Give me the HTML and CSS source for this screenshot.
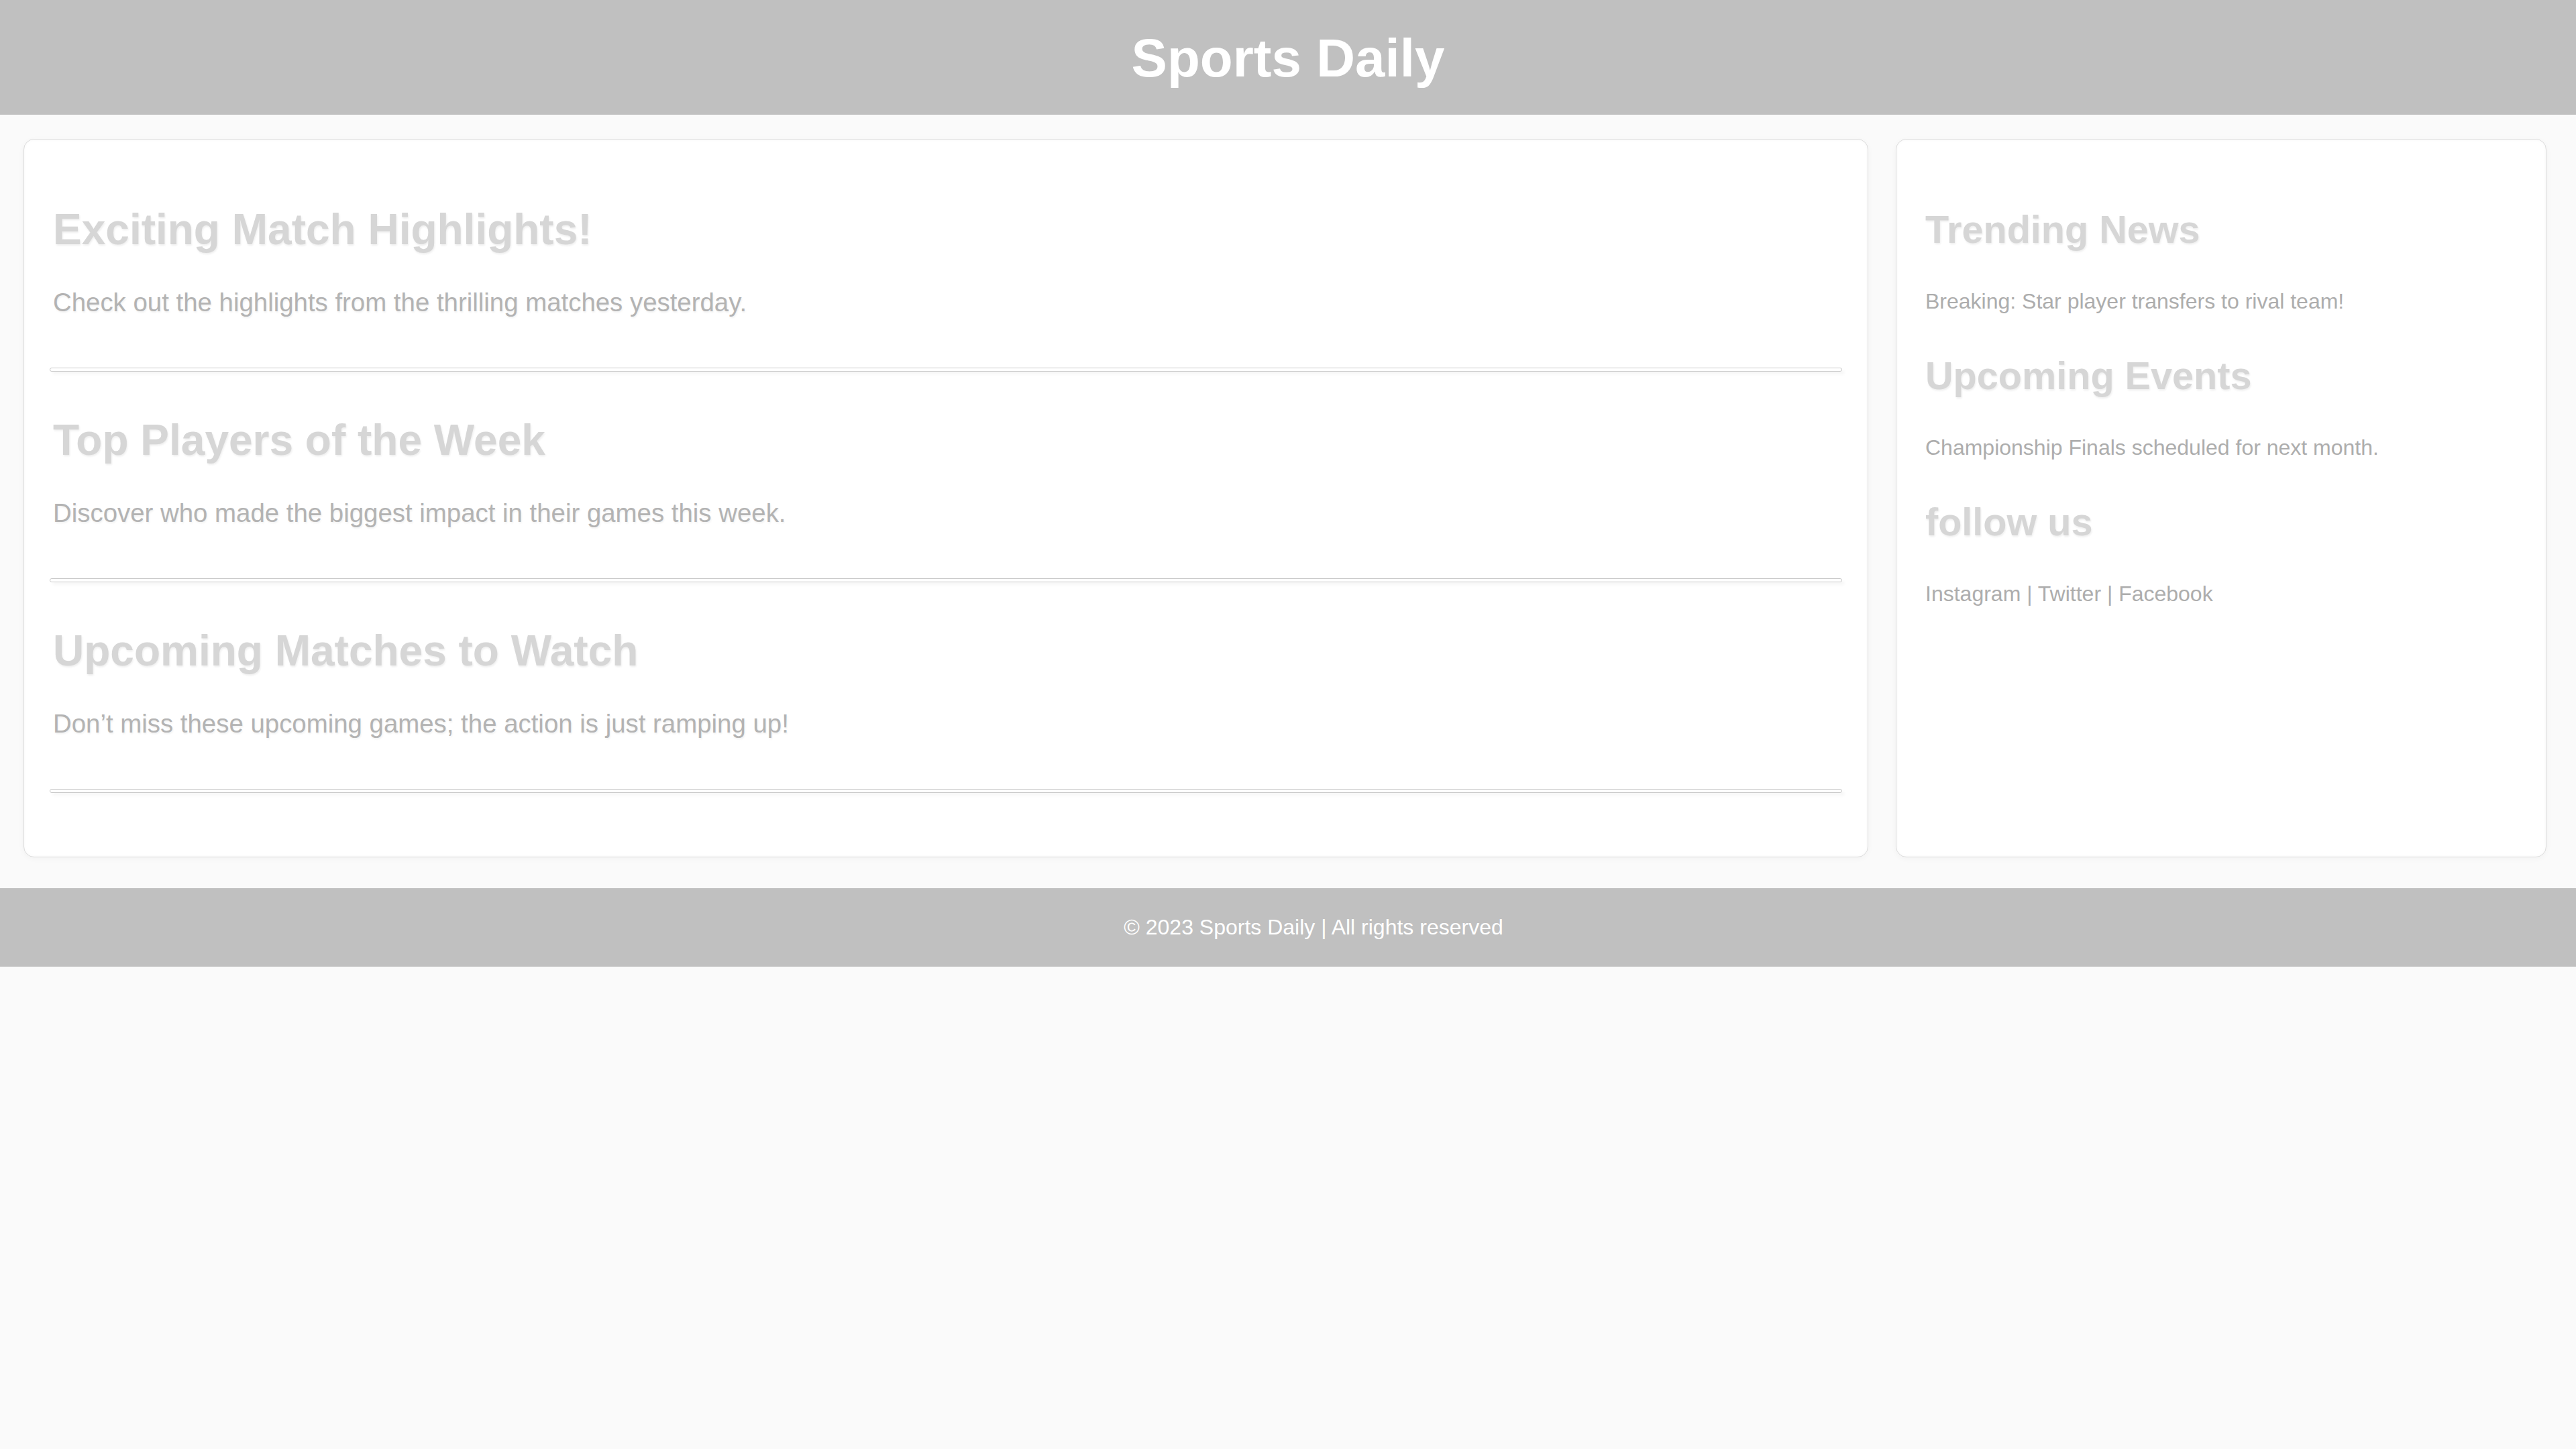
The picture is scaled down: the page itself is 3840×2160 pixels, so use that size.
FILE: index.html
```html
<!DOCTYPE html>
<html lang="en">
<head>
<meta charset="utf-8">
<title>Sports Daily</title>
<link rel="stylesheet" href="styles.css">
</head>
<body>
<header class="site-header">
  <h1 class="site-title">Sports Daily</h1>
</header>
<div class="layout">
  <main class="card main-card">
    <article class="story">
      <h2 class="story-title">Exciting Match Highlights!</h2>
      <p class="story-text">Check out the highlights from the thrilling matches yesterday.</p>
      <hr class="divider">
    </article>
    <article class="story">
      <h2 class="story-title">Top Players of the Week</h2>
      <p class="story-text">Discover who made the biggest impact in their games this week.</p>
      <hr class="divider">
    </article>
    <article class="story">
      <h2 class="story-title">Upcoming Matches to Watch</h2>
      <p class="story-text">Don’t miss these upcoming games; the action is just ramping up!</p>
      <hr class="divider">
    </article>
  </main>
  <aside class="card side-card">
    <h2 class="side-title">Trending News</h2>
    <p class="side-text">Breaking: Star player transfers to rival team!</p>
    <h2 class="side-title">Upcoming Events</h2>
    <p class="side-text">Championship Finals scheduled for next month.</p>
    <h2 class="side-title">follow us</h2>
    <p class="side-text">Instagram | Twitter | Facebook</p>
  </aside>
</div>
<footer class="site-footer">
  <p class="footer-text">© 2023 Sports Daily | All rights reserved</p>
</footer>
</body>
</html>
```
FILE: styles.css
```css
html, body {
  margin: 0;
  padding: 0;
}
body {
  background: #fafafa;
  font-family: "Liberation Sans", Arial, Helvetica, sans-serif;
  min-height: 2160px;
}
.site-header {
  background: #c0c0c0;
  padding: 41px 0 38px;
  text-align: center;
}
.site-title {
  margin: 0;
  font-size: 80px;
  line-height: 92px;
  font-weight: 700;
  color: #ffffff;
}
.layout {
  display: grid;
  grid-template-columns: 1fr 970px;
  gap: 41px;
  padding: 36px 44px 46px 35px;
  align-items: stretch;
}
.card {
  background: #ffffff;
  border: 1px solid #dcdcdc;
  border-radius: 16px;
  box-shadow: 0 2px 10px rgba(0, 0, 0, 0.035), inset 0 0 5px rgba(0, 0, 0, 0.03);
}
.main-card {
  padding: 97px 38px 30px;
}
.story-title {
  margin: 0 0 50px;
  padding-left: 5px;
  font-size: 64px;
  line-height: 74px;
  font-weight: 700;
  color: #d6d6d6;
  text-shadow: 1px 2px 3px rgba(0, 0, 0, 0.07);
}
.story-text {
  margin: 0 0 75px;
  padding-left: 5px;
  font-size: 38.4px;
  line-height: 44px;
  color: #b3b3b3;
  text-shadow: 1px 2px 3px rgba(0, 0, 0, 0.06);
}
.divider {
  margin: 0 0 65px;
  height: 4px;
  border: 1px solid #c9c9c9;
  border-radius: 3px;
  box-shadow: 4px 4px 4px rgba(0, 0, 0, 0.035);
  background: #ffffff;
}
.side-card {
  padding: 101px 40px 40px 43px;
}
.side-title {
  margin: 0 0 56px;
  font-size: 57.6px;
  line-height: 66px;
  font-weight: 700;
  color: #d6d6d6;
  text-shadow: 1px 2px 3px rgba(0, 0, 0, 0.07);
}
.side-text {
  margin: 0 0 59px;
  font-size: 32px;
  line-height: 37px;
  color: #adadad;
}
.site-footer {
  background: #c0c0c0;
  padding: 40px 0 40px 76px;
  text-align: center;
}
.footer-text {
  margin: 0;
  font-size: 32px;
  line-height: 37px;
  color: #ffffff;
}
```
